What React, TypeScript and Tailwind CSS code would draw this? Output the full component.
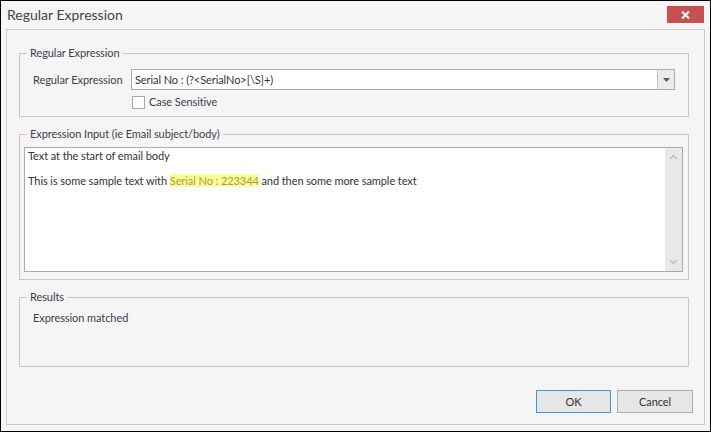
import React from 'react';

const font = { fontFamily: '"Segoe UI", Lato, "Liberation Sans", sans-serif' };

function GroupBox({ title, className, children }: { title: string; className?: string; children: React.ReactNode }) {
  return (
    <fieldset className={`border border-[#c6c6c6] mx-[12px] mr-[15px] ${className ?? ''}`}>
      <legend className="ml-[7px] px-[3px] leading-[16px] text-[#3d3d4d]">{title}</legend>
      {children}
    </fieldset>
  );
}

export default function App() {
  return (
    <div
      className="w-[711px] h-[432px] border border-black bg-[#f5f5f5] flex flex-col text-[11px] tracking-[-0.08px] text-[#3d3d4d] overflow-hidden"
      style={font}
    >
      {/* title bar */}
      <div className="h-[28px] flex items-start justify-between">
        <span className="pl-[6px] pt-[5px] text-[14px] leading-[18px] tracking-normal text-[#444]">Regular Expression</span>
        <button className="mt-[5px] mr-[6px] w-[37px] h-[17px] bg-[#c75050] flex items-center justify-center">
          <svg width="9" height="8" viewBox="0 0 9 8">
            <path d="M1 0.5 L8 7.5 M8 0.5 L1 7.5" stroke="#fff" strokeWidth="2" />
          </svg>
        </button>
      </div>

      {/* content panel */}
      <div className="flex-1 mx-[5px] mb-[6px] border border-[#c9c9c9] flex flex-col">
        <GroupBox title="Regular Expression" className="mt-[15px] pb-[6px]">
          <div className="flex items-center pl-[13px] pr-[13px] mt-[8px]">
            <span className="w-[98px] shrink-0 leading-[16px]">Regular Expression</span>
            <div className="flex-1 h-[21px] border border-[#ababab] bg-white flex">
              <span className="flex-1 pl-[3px] leading-[19px] text-[#333]">Serial No : (?&lt;SerialNo&gt;[\S]+)</span>
              <div className="w-[17px] h-full bg-[#ececec] border-l border-[#c4c4c4] flex items-center justify-center">
                <svg width="7" height="4" viewBox="0 0 7 4">
                  <path d="M0 0 H7 L3.5 4 Z" fill="#5a5a5a" />
                </svg>
              </div>
            </div>
          </div>
          <div className="flex items-center gap-[4px] pl-[112px] mt-[4px]">
            <span className="w-[13px] h-[13px] border border-[#a8a8a8] bg-white" />
            <span className="leading-[16px]">Case Sensitive</span>
          </div>
        </GroupBox>

        <GroupBox title="Expression Input (ie Email subject/body)" className="mt-[9px] pb-[7px]">
          <div className="ml-[4px] mr-[5px] mt-[5px] h-[125px] border border-[#ababab] bg-white flex">
            <div className="flex-1 pl-[3px] text-[#333] flex flex-col gap-[9px]">
              <div className="leading-[16px]">Text at the start of email body</div>
              <div className="leading-[16px]">
                This is some sample text with{' '}
                <span className="bg-[#fbfb9c] text-[#a69f48]">Serial No : 223344</span> and then some more sample text
              </div>
            </div>
            <div className="w-[17px] h-full bg-[#e8e8e8] flex flex-col items-center justify-between py-[6px]">
              <svg width="9" height="6" viewBox="0 0 9 6">
                <path d="M1 5 L4.5 1.5 L8 5" stroke="#bdbdbd" strokeWidth="1.5" fill="none" />
              </svg>
              <svg width="9" height="6" viewBox="0 0 9 6">
                <path d="M1 1 L4.5 4.5 L8 1" stroke="#bdbdbd" strokeWidth="1.5" fill="none" />
              </svg>
            </div>
          </div>
        </GroupBox>

        <GroupBox title="Results" className="mt-[9px] h-[78px]">
          <div className="pl-[13px] mt-[5px] leading-[16px]">Expression matched</div>
        </GroupBox>

        <div className="flex justify-end gap-[6px] mr-[11px] mt-[23px]">
          <button className="w-[75px] h-[23px] border border-[#3c97e8] bg-[#e6e6e6] text-[#333] leading-[21px]">OK</button>
          <button className="w-[76px] h-[23px] border border-[#acacac] bg-[#e6e6e6] text-[#333] leading-[21px]">Cancel</button>
        </div>
      </div>
    </div>
  );
}
